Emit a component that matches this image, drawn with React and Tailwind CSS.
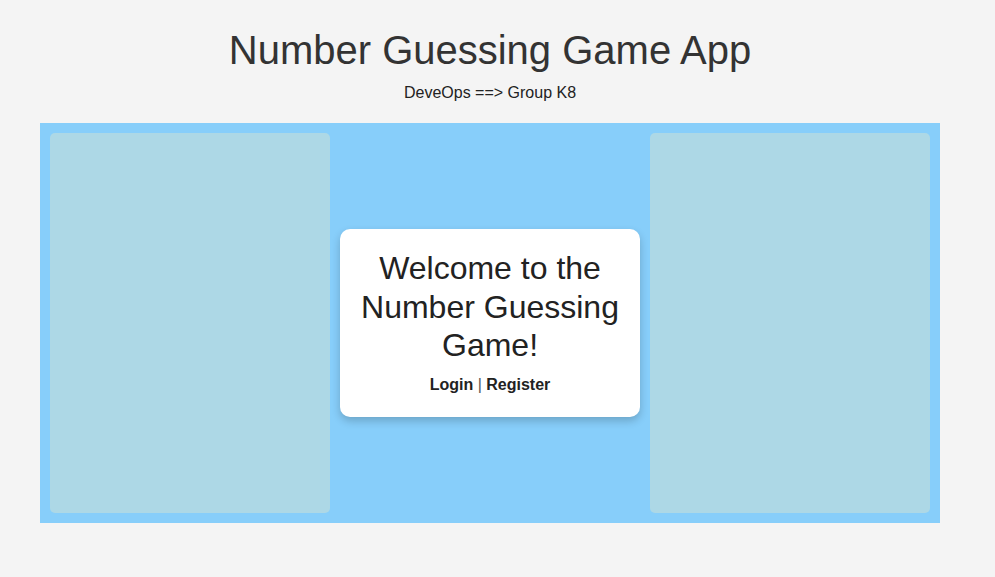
import React from 'react';

const font = { fontFamily: '"Liberation Sans", Arial, sans-serif' };

export default function App() {
  return (
    <div className="min-h-screen bg-[#f4f4f4] text-[#333]" style={font}>
      <div className="w-[980px] flex flex-col items-center">
        <h1 className="mt-[27px] text-[40px] leading-[46px] text-[#333]">Number Guessing Game App</h1>
        <p className="mt-[11px] text-[16px] leading-[18px] text-[#222]">DeveOps ==&gt; Group K8</p>

        <div className="mt-[21px] w-[900px] h-[400px] p-[10px] flex items-center gap-[10px] bg-[#87cefa]">
          <div className="w-[280px] h-full rounded-[5px] bg-[#add8e6]" />

          <div className="w-[300px] bg-white rounded-[10px] shadow-[0_4px_8px_rgba(0,0,0,0.2)] pt-[20px] pb-[23px] px-[20px] text-center">
            <h2 className="text-[32px] leading-[38.4px] text-[#222]">Welcome to the Number Guessing Game!</h2>
            <p className="mt-[11px] text-[16px] leading-[18px]">
              <a href="#" className="font-bold text-[#222]">Login</a>
              <span className="text-[#555]"> | </span>
              <a href="#" className="font-bold text-[#222]">Register</a>
            </p>
          </div>

          <div className="w-[280px] h-full rounded-[5px] bg-[#add8e6]" />
        </div>
      </div>
    </div>
  );
}
